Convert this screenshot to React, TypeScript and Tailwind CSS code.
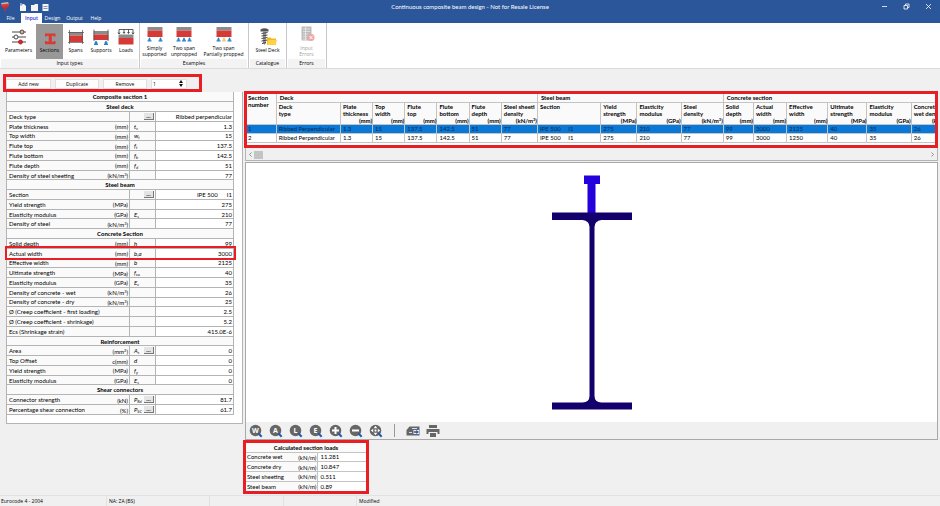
import { useState } from 'react';
import type { ReactNode } from 'react';

interface Row {
    name: string;
    unit?: ReactNode;
    sym?: string;
    sub?: string;
    more?: boolean;
    value: string;
    marked?: boolean;
}

interface Group {
    title: string;
    rows: Row[];
}

const perM3 = <>(kN/m<sup className="text-[4px]">3</sup>)</>;
const mm2 = <>(mm<sup className="text-[4px]">2</sup>)</>;

const groups: Group[] = [
    {
        title: 'Steel deck',
        rows: [
            { name: 'Deck type', more: true, value: 'Ribbed perpendicular' },
            { name: 'Plate thickness', unit: '(mm)', sym: 't', sub: 'c', value: '1.3' },
            { name: 'Top width', unit: '(mm)', sym: 'w', sub: 't', value: '15' },
            { name: 'Flute top', unit: '(mm)', sym: 'f', sub: 't', value: '137.5' },
            { name: 'Flute bottom', unit: '(mm)', sym: 'f', sub: 'b', value: '142.5' },
            { name: 'Flute depth', unit: '(mm)', sym: 'f', sub: 'd', value: '51' },
            { name: 'Density of steel sheeting', unit: perM3, value: '77' },
        ],
    },
    {
        title: 'Steel beam',
        rows: [
            { name: 'Section', more: true, value: 'IPE 500\u00a0\u00a0\u00a0\u00a0\u00a0\u00a0I1' },
            { name: 'Yield strength', unit: '(MPa)', value: '275' },
            { name: 'Elasticity modulus', unit: '(GPa)', sym: 'E', sub: 's', value: '210' },
            { name: 'Density of steel', unit: perM3, value: '77' },
        ],
    },
    {
        title: 'Concrete Section',
        rows: [
            { name: 'Solid depth', unit: '(mm)', sym: 'h', value: '99' },
            { name: 'Actual width', unit: '(mm)', sym: 'b,a', value: '3000', marked: true },
            { name: 'Effective width', unit: '(mm)', sym: 'b', value: '2125' },
            { name: 'Ultimate strength', unit: '(MPa)', sym: 'f', sub: 'cu', value: '40' },
            { name: 'Elasticity modulus', unit: '(GPa)', sym: 'E', sub: 'c', value: '35' },
            { name: 'Density of concrete - wet', unit: perM3, value: '26' },
            { name: 'Density of concrete - dry', unit: perM3, value: '25' },
            { name: 'Ø (Creep coefficient - first loading)', value: '2.5' },
            { name: 'Ø (Creep coefficient - shrinkage)', value: '5.2' },
            { name: 'Ecs (Shrinkage strain)', value: '415.0E-6' },
        ],
    },
    {
        title: 'Reinforcement',
        rows: [
            { name: 'Area', unit: mm2, sym: 'A', sub: 's', more: true, value: '0' },
            { name: 'Top Offset', unit: 'c(mm)', sym: 'd', value: '0' },
            { name: 'Yield strength', unit: '(MPa)', sym: 'f', sub: 'y', value: '0' },
            { name: 'Elasticity modulus', unit: '(GPa)', sym: 'E', sub: 's', value: '0' },
        ],
    },
    {
        title: 'Shear connectors',
        rows: [
            { name: 'Connector strength', unit: '(kN)', sym: 'P', sub: 'Rd', more: true, value: '81.7' },
            { name: 'Percentage shear connection', unit: '(%)', sym: 'P', sub: 'SC', more: true, value: '61.7' },
        ],
    },
];

interface Column {
    width: string;
    lines: [string, string];
    unit?: ReactNode;
    values: [string, string];
}

const columns: Column[] = [
    { width: 'w-[64px]', lines: ['Deck', 'type'], values: ['Ribbed Perpendicular', 'Ribbed Perpendicular'] },
    { width: 'w-[32px]', lines: ['Plate', 'thickness'], unit: '(mm)', values: ['1.3', '1.3'] },
    { width: 'w-[32px]', lines: ['Top', 'width'], unit: '(mm)', values: ['15', '15'] },
    { width: 'w-[32px]', lines: ['Flute', 'top'], unit: '(mm)', values: ['137.5', '137.5'] },
    { width: 'w-[32px]', lines: ['Flute', 'bottom'], unit: '(mm)', values: ['142.5', '142.5'] },
    { width: 'w-[32px]', lines: ['Flute', 'depth'], unit: '(mm)', values: ['51', '51'] },
    { width: 'w-[36px]', lines: ['Steel sheeti', 'density'], unit: perM3, values: ['77', '77'] },
    { width: 'w-[63px]', lines: ['Section', ''], values: ['IPE 500\u00a0\u00a0\u00a0\u00a0\u00a0I1', 'IPE 500\u00a0\u00a0\u00a0\u00a0\u00a0I1'] },
    { width: 'w-[36px]', lines: ['Yield', 'strength'], unit: '(MPa)', values: ['275', '275'] },
    { width: 'w-[44px]', lines: ['Elasticity', 'modulus'], unit: '(GPa)', values: ['210', '210'] },
    { width: 'w-[42px]', lines: ['Steel', 'density'], unit: perM3, values: ['77', '77'] },
    { width: 'w-[30px]', lines: ['Solid', 'depth'], unit: '(mm)', values: ['99', '99'] },
    { width: 'w-[33px]', lines: ['Actual', 'width'], unit: '(mm)', values: ['3000', '3000'] },
    { width: 'w-[41px]', lines: ['Effective', 'width'], unit: '(mm)', values: ['2125', '1250'] },
    { width: 'w-[39px]', lines: ['Ultimate', 'strength'], unit: '(MPa)', values: ['40', '40'] },
    { width: 'w-[44px]', lines: ['Elasticity', 'modulus'], unit: '(GPa)', values: ['35', '35'] },
    { width: 'w-[42px]', lines: ['Concrete', 'wet density'], unit: perM3, values: ['26', '26'] },
];

const loads = [
    ['Concrete wet', '11.281'],
    ['Concrete dry', '10.847'],
    ['Steel sheeting', '0.511'],
    ['Steel beam', '0.89'],
];

/* ---------- ribbon icons ---------- */

const ParametersIcon = () => (
    <svg className="h-5 w-5" viewBox="0 0 20 20" fill="none" stroke="#4a4a4a" strokeWidth="1">
        <path d="M3 5h14M3 10h14M3 15h14" />
        <circle cx="13" cy="5" r="2" fill="#f2a0a0" />
        <circle cx="7" cy="10" r="2" fill="#fff" />
        <circle cx="11.500" cy="15" r="2" fill="#e02020" stroke="#a33" />
    </svg>
);

const SectionsIcon = () => (
    <svg className="h-5 w-5" viewBox="0 0 20 20" fill="#d93a33">
        <path d="M5 6.500h10.500v3H14l-.8-.8h-1.400v6h1.400l.8-.8h1.500v3.300H5v-3.300h1.500l.8.8h1.400v-6H7.300l-.8.8H5z" />
    </svg>
);

const SpansIcon = () => (
    <svg className="h-5 w-5" viewBox="0 0 20 20">
        <path d="M3 5h14v3.500H3z" fill="#8c8c8c" />
        <path d="M3 8.500h14V15H3z" fill="#d53a34" />
        <path d="M3.500 3v14M16.500 3v14M2 5.500h16M2 15.500h16" stroke="#555" strokeWidth=".7" />
    </svg>
);

const SupportsIcon = () => (
    <svg className="h-5 w-5" viewBox="0 0 20 20">
        <path d="M2.500 4h15v3.500h-15z" fill="#8c8c8c" />
        <path d="M2.500 7.500h15V13h-15z" fill="#d53a34" />
        <path d="M3 2.500v11.500M17 2.500v11.500" stroke="#555" strokeWidth=".8" />
        <path d="M5 13.500l1.500 2-.5 1h1V18H3v-1.500h1l-.5-1zM15 13.500l1.500 2-.5 1h1V18h-4v-1.500h1l-.5-1z" fill="#2583c9" />
    </svg>
);

const LoadsIcon = () => (
    <svg className="h-5 w-5" viewBox="0 0 20 20">
        <path d="M2.500 7.500h15V11h-15z" fill="#8c8c8c" />
        <path d="M2.500 11h15v6.500h-15z" fill="#d53a34" />
        <path d="M3 7V2.500h14V7M8 2.500V6M12.500 2.500V6M2 5.500l1 1.500 1-1.500M7 5l1 1.500L9 5M11.500 5l1 1.500 1-1.500M16 5.500l1 1.500 1-1.500" fill="none" stroke="#333" strokeWidth=".8" />
    </svg>
);

const SpanExampleIcon = ({ mid }: { mid?: string }) => (
    <svg className="h-5 w-5" viewBox="0 0 20 20">
        <path d="M2.500 2h15v3.500h-15z" fill="#8c8c8c" />
        <path d="M2.500 5.500h15V12h-15z" fill="#d53a34" />
        <path d="M4.500 12.300l1.300 2-.5 1H6.500v1.200h-4v-1.200h1.200l-.5-1zM15.500 12.300l1.300 2-.5 1h1.200v1.200h-4v-1.200h1.200l-.5-1z" fill="#2583c9" />
        {mid && <path d="M10 12.300l1.300 2-.5 1H12v1.200H8v-1.200h1.200l-.5-1z" fill={mid} />}
    </svg>
);

const SteelDeckIcon = () => (
    <svg className="h-5 w-5" viewBox="0 0 20 20">
        <path d="M2.500 2.500Q6.500 0 10.500 2.500V4.500h-8z" fill="#555" />
        <path d="M5 4h3v12l-1.500 2L5 16z" fill="#999" />
        <path d="M3.500 6.500l6-1M3.500 9l6-1M3.500 11.500l6-1M3.500 14l6-1M4 16.500l4-1" stroke="#444" strokeWidth="1" />
        <path d="M9 10.500h3.500l1 1H18V18H9z" fill="#f7b918" />
        <path d="M10.500 13H19l-1.500 5H9z" fill="#ffd04a" />
    </svg>
);

const ErrorsIcon = () => (
    <svg className="h-5 w-5" viewBox="0 0 20 20">
        <path d="M4.500 1.500h10v14h-10z" fill="#bdbdbd" />
        <path d="M6 4h7M6 6.500h7M6 9h5M6 11.500h4M6 14h4M8.500 2v13" stroke="#eee" strokeWidth=".7" />
        <circle cx="14" cy="12.500" r="3.500" fill="#f0a5a5" />
        <path d="M12.500 11l3 3M15.500 11l-3 3" stroke="#fff" strokeWidth="1" />
    </svg>
);

/* ---------- view toolbar icons ---------- */

const LensIcon = ({ children }: { children: ReactNode }) => (
    <svg className="h-[14px] w-[14px]" viewBox="0 0 14 14">
        <circle cx="6.500" cy="6.500" r="5.800" fill="#666" />
        {children}
        <path d="M9.300 9.300l3.400 3.400" stroke="#2457b5" strokeWidth="2" />
    </svg>
);

const Letter = ({ ch }: { ch: string }) => (
    <text x="6.500" y="9" textAnchor="middle" fontSize="7" fontWeight="700" fill="#fff">{ch}</text>
);

const viewTools: { label: string; icon: ReactNode }[] = [
    { label: 'Zoom window', icon: <Letter ch="W" /> },
    { label: 'Zoom all', icon: <Letter ch="A" /> },
    { label: 'Zoom last', icon: <Letter ch="L" /> },
    { label: 'Zoom extents', icon: <Letter ch="E" /> },
    { label: 'Zoom in', icon: <path d="M3 6.500h7M6.500 3v7" stroke="#fff" strokeWidth="2" /> },
    { label: 'Zoom out', icon: <path d="M3 6.500h7" stroke="#fff" strokeWidth="2" /> },
    {
        label: 'Pan',
        icon: (
            <path d="M6.500 1.800l1.800 2.400H4.700zM6.500 11.200l1.800-2.400H4.700zM1.800 6.500l2.400-1.800v3.600zM11.200 6.500L8.800 4.700v3.600zM5.600 5.600h1.800v1.800H5.600z" fill="#fff" />
        ),
    },
];

const RibbonButton = ({ icon, label, width, active, disabled }: {
    icon: ReactNode; label: string[]; width: string; active?: boolean; disabled?: boolean;
}) => (
    <button
        disabled={disabled}
        className={`flex h-[35px] flex-col items-center ${width} ${active ? 'bg-[#989898]' : ''} ${disabled ? 'text-[#a0a0a0]' : ''}`}
    >
        <span className={label.length === 1 ? 'pt-[3px]' : 'pt-[1px]'}>{icon}</span>
        <span className="flex flex-col whitespace-nowrap leading-[6px]">
            {label.map((line) => <span key={line}>{line}</span>)}
        </span>
    </button>
);

const RibbonGroup = ({ title, children }: { title: string; children: ReactNode }) => (
    <div className="flex flex-col border-r border-[#c8c8c8] px-[1px]">
        <div className="flex pt-[1px]">{children}</div>
        <div className="h-[9px] bg-[#f3f3f3] text-center leading-[9px]">{title}</div>
    </div>
);

const App: React.FC = () => {
    const [section, setSection] = useState(1);

    return (
        <div className="flex min-h-screen flex-col overflow-hidden bg-[#f0f0f0] font-['Open_Sans','Noto_Sans',sans-serif] text-[5px] text-black">
            <header className="bg-[#2b579a] text-white">
                <div className="flex h-[13px] items-center">
                    <div className="flex flex-1 items-center">
                        <svg className="ml-[1px] h-[9px] w-[9px]" viewBox="0 0 9 9">
                            <path d="M0 1l7-1 1 2-7 1z" fill="#bbb" />
                            <path d="M0 2.500L8 1.500V4L1 5z" fill="#e03a30" />
                            <path d="M2 5l5-1v1.500l-2 .5v1.500l1 .5-3 1V7.500H4V6L2 6.500z" fill="#d92c25" />
                        </svg>
                        <svg className="ml-2 h-[9px] w-8" viewBox="0 0 32 9" fill="#f4f4f4">
                            <path d="M2 2h4l2 2v5H2zM13 3h3l1-1h3v7h-7zM24.500 2h6v7h-6z" />
                            <path d="M2 1h2v2H2zM25.500 4.500h4M25.500 6.500h4" stroke="#2b579a" strokeWidth=".6" />
                        </svg>
                    </div>
                    <h1 className="font-['Lato','Noto_Sans',sans-serif] text-[6px] leading-[9px]">Continuous composite beam design - Not for Resale License</h1>
                    <div className="flex flex-1 justify-end">
                        <div className="mr-2 flex w-0 items-center justify-end gap-[15px]">
                            <button aria-label="Minimize">
                                <svg className="h-[7px] w-[7px]" viewBox="0 0 7 7" stroke="#fff" strokeWidth=".8"><path d="M1 3.500h5" /></svg>
                            </button>
                            <button aria-label="Restore">
                                <svg className="h-[7px] w-[7px]" viewBox="0 0 7 7" fill="none" stroke="#fff" strokeWidth=".8">
                                    <path d="M1 2.500h3.500V6H1zM2.500 2V1H6v3.500H5" />
                                </svg>
                            </button>
                            <button aria-label="Close">
                                <svg className="h-[7px] w-[7px]" viewBox="0 0 7 7" stroke="#fff" strokeWidth=".8"><path d="M1 1l5 5M6 1L1 6" /></svg>
                            </button>
                        </div>
                    </div>
                </div>
                <nav className="flex h-[10px] leading-[10px]">
                    <button className="w-[21px]">File</button>
                    <button className="w-[21px] bg-white font-semibold text-[#2b2be0]">Input</button>
                    <button className="w-[21px]">Design</button>
                    <button className="w-[23px]">Output</button>
                    <button className="w-[20px]">Help</button>
                </nav>
            </header>

            <div className="flex h-[46px] border-b border-[#dcdcdc] bg-white">
                <RibbonGroup title="Input types">
                    <RibbonButton icon={<ParametersIcon />} label={['Parameters']} width="w-[35px]" />
                    <RibbonButton icon={<SectionsIcon />} label={['Sections']} width="w-[27px]" active />
                    <RibbonButton icon={<SpansIcon />} label={['Spans']} width="w-[25px]" />
                    <RibbonButton icon={<SupportsIcon />} label={['Supports']} width="w-[26px]" />
                    <RibbonButton icon={<LoadsIcon />} label={['Loads']} width="w-[24px]" />
                </RibbonGroup>
                <RibbonGroup title="Examples">
                    <RibbonButton icon={<SpanExampleIcon />} label={['Simply', 'supported']} width="w-[27px]" />
                    <RibbonButton icon={<SpanExampleIcon mid="#2583c9" />} label={['Two span', 'unpropped']} width="w-[32px]" />
                    <RibbonButton icon={<SpanExampleIcon mid="#f5c668" />} label={['Two span', 'Partially propped']} width="w-[47px]" />
                </RibbonGroup>
                <RibbonGroup title="Catalogue">
                    <RibbonButton icon={<SteelDeckIcon />} label={['Steel Deck']} width="w-[35px]" />
                </RibbonGroup>
                <RibbonGroup title="Errors">
                    <RibbonButton icon={<ErrorsIcon />} label={['Input', 'Errors']} width="w-[37px]" disabled />
                </RibbonGroup>
            </div>

            <main className="flex flex-1 pr-[2px]">
                <section className="w-[243px] shrink-0 pl-[3px] pt-[5px]">
                    <div className="flex h-[18px] w-[199px] items-center gap-1 border-3 border-[#e81e25] pt-[1px]">
                        <button className="h-[10px] w-[45px] border border-[#e0e0e0] bg-[#fdfdfd] leading-[8px]">Add new</button>
                        <button className="h-[10px] w-[44px] border border-[#e0e0e0] bg-[#fdfdfd] leading-[8px]">Duplicate</button>
                        <button className="h-[10px] w-[44px] border border-[#e0e0e0] bg-[#fdfdfd] leading-[8px]">Remove</button>
                        <div className="flex h-[10px] w-[36px] items-center border border-[#e0e0e0] bg-white">
                            <input
                                aria-label="Section"
                                value={section}
                                onChange={(e) => setSection(Number(e.target.value) || 1)}
                                className="w-full min-w-0 pl-[1px] leading-[8px] outline-none"
                            />
                            <div className="flex flex-col gap-[1px] pr-[3px]">
                                <button aria-label="Next section" onClick={() => setSection(section + 1)}>
                                    <svg className="block h-[3px] w-[4px]" viewBox="0 0 4 3"><path d="M2 0l2 3H0z" fill="#111" /></svg>
                                </button>
                                <button aria-label="Previous section" onClick={() => setSection(Math.max(1, section - 1))}>
                                    <svg className="block h-[3px] w-[4px]" viewBox="0 0 4 3"><path d="M0 0h4L2 3z" fill="#111" /></svg>
                                </button>
                            </div>
                        </div>
                    </div>

                    <div className="ml-[3px] border-x border-b border-[#b4b4b4] bg-white pb-2 pr-2">
                        <table className="h-[323px] w-full table-fixed font-['Lato','Noto_Sans',sans-serif] text-[6px] leading-[7px]">
                            <colgroup>
                                <col />
                                <col className="w-[22px]" />
                                <col className="w-[26px]" />
                                <col className="w-[78px]" />
                            </colgroup>
                            <tbody>
                                <tr className="h-[9px] border-b border-[#b4b4b4] bg-[#fafafa]">
                                    <th colSpan={4} className="border-r border-[#b4b4b4]">Composite section 1</th>
                                </tr>
                                {groups.map((g) => [
                                    <tr key={g.title} className="h-[9px] border-b border-[#b4b4b4] bg-[#fafafa]">
                                        <th colSpan={4} className="border-r border-[#b4b4b4]">{g.title}</th>
                                    </tr>,
                                    ...g.rows.map((r) => (
                                        <tr
                                            key={g.title + r.name}
                                            className={`h-[9px] border-b border-[#b4b4b4] ${r.marked ? 'relative z-10 outline-2 outline-[#e81e25]' : ''}`}
                                        >
                                            <td className="whitespace-nowrap bg-[#fafafa] pl-[2px]">{r.name}</td>
                                            <td className="whitespace-nowrap border-r border-[#b4b4b4] bg-[#fafafa] pr-[1px] pt-[2px] text-right leading-[6px]">{r.unit}</td>
                                            <td className="border-r border-[#b4b4b4] bg-[#fafafa] px-[1px]">
                                                <div className="flex h-[7px] items-center justify-between">
                                                    <span className="pl-[3px] italic">
                                                        {r.sym}
                                                        {r.sub && <sub className="text-[4px]">{r.sub}</sub>}
                                                    </span>
                                                    {r.more && (
                                                        <button
                                                            aria-label={`Choose ${r.name}`}
                                                            className="h-[7px] w-[10px] border-b border-r border-[#777] bg-[#e4e4e4] font-bold leading-[4px]"
                                                        >
                                                            ...
                                                        </button>
                                                    )}
                                                </div>
                                            </td>
                                            <td className="whitespace-nowrap border-r border-[#b4b4b4] pr-[1px] text-right">{r.value}</td>
                                        </tr>
                                    )),
                                ])}
                            </tbody>
                        </table>
                    </div>
                </section>

                <section className="mt-[22px] flex min-w-0 flex-1 flex-col">
                    <div className="ml-[1px] h-[57px] overflow-hidden border-3 border-[#e81e25] bg-white">
                        <table className="w-[707px] table-fixed text-left font-['Lato','Noto_Sans',sans-serif] text-[6px] leading-[7px]">
                            <colgroup>
                                <col className="w-[29px]" />
                                {columns.map((c, i) => <col key={i} className={c.width} />)}
                            </colgroup>
                            <thead className="bg-[#fafafa] align-top">
                                <tr className="h-[8px] border-b border-[#c4c4c4]">
                                    <th rowSpan={2} className="border-r border-[#c4c4c4] pl-[1px]">Section<br />number</th>
                                    <th colSpan={7} className="border-r border-[#c4c4c4] pl-[3px]">Deck</th>
                                    <th colSpan={4} className="border-r border-[#c4c4c4] pl-[3px]">Steel beam</th>
                                    <th colSpan={6} className="pl-[3px]">Concrete section</th>
                                </tr>
                                <tr className="h-[22px] border-b border-[#c4c4c4]">
                                    {columns.map((c, i) => (
                                        <th key={i} className="whitespace-nowrap border-r border-[#c4c4c4] pl-[2px]">
                                            <div>{c.lines[0]}</div>
                                            <div>{c.lines[1]}</div>
                                            <div className="text-right">{c.unit}</div>
                                        </th>
                                    ))}
                                </tr>
                            </thead>
                            <tbody>
                                {[0, 1].map((n) => (
                                    <tr key={n} className={`h-[9px] border-b border-[#c4c4c4] ${n === 0 ? 'bg-[#0a78d7] text-[#06284c]' : ''}`}>
                                        <td className="border-r border-[#c4c4c4] pl-[1px]">{n + 1}</td>
                                        {columns.map((c, i) => (
                                            <td key={i} className="whitespace-nowrap border-r border-[#c4c4c4] pl-[2px]">{c.values[n]}</td>
                                        ))}
                                    </tr>
                                ))}
                            </tbody>
                        </table>
                    </div>
                    <div className="ml-[2px] flex h-[13px] items-center border-x border-b border-[#b4b4b4] px-[3px] pt-[1px]">
                        <button aria-label="Scroll left">
                            <svg className="h-[5px] w-[3px]" viewBox="0 0 3 5" fill="none" stroke="#777" strokeWidth=".8"><path d="M2.500 0.500l-2 2 2 2" /></svg>
                        </button>
                        <div className="ml-[2px] h-[8px] w-[9px] bg-[#c4c4c4]" />
                        <button aria-label="Scroll right" className="ml-auto">
                            <svg className="h-[5px] w-[3px]" viewBox="0 0 3 5" fill="none" stroke="#777" strokeWidth=".8"><path d="M0.500 0.500l2 2-2 2" /></svg>
                        </button>
                    </div>

                    <div className="ml-[2px] mt-[1px] border border-[#a8a8a8]">
                        <div className="flex justify-center bg-white py-3">
                            <svg className="h-[235px] w-20" viewBox="0 0 80 235">
                                <path d="M32 0.500h16v8.500h-4.500v29h-8V9H32z" fill="#2400dc" />
                                <path d="M0 37.500h80V45H49.500Q42.500 46 42.500 52v169Q42.500 227 49.500 227.500H80v7H0v-7h30.500Q37.500 227 37.500 221V52Q37.500 46 30.500 45H0z" fill="#14006c" />
                            </svg>
                        </div>
                        <div className="flex h-[17px] items-center gap-[6px] pl-[3px]">
                            {viewTools.map((t) => (
                                <button key={t.label} aria-label={t.label}><LensIcon>{t.icon}</LensIcon></button>
                            ))}
                            <div className="mx-[5px] h-[13px] w-[1px] bg-[#999]" />
                            <button aria-label="Export drawing">
                                <svg className="h-[12px] w-[14px]" viewBox="0 0 14 12">
                                    <path d="M.5 5l3-3.500h10v9H.5z" fill="#666" />
                                    <path d="M6 3h5v1H6zM3 7h3v1H3z" fill="#ddd" />
                                    <path d="M7.500 5H13v4H7.500z" fill="#e8eefc" />
                                    <path d="M8 6.300h2.300V5L13 7l-2.700 2V7.700H8z" fill="#2457b5" />
                                </svg>
                            </button>
                            <button aria-label="Print">
                                <svg className="h-[12px] w-[14px]" viewBox="0 0 14 12" fill="#666">
                                    <path d="M3 0h8v3H3zM.5 4h13v5H11.500V7h-9v2h-2zM4 8h6v4H4z" />
                                </svg>
                            </button>
                        </div>
                    </div>

                    <div className="w-[126px] border-3 border-[#e81e25] bg-white">
                        <table className="h-[48px] w-full table-fixed font-['Lato','Noto_Sans',sans-serif] text-[6px] leading-[7px]">
                            <colgroup>
                                <col />
                                <col className="w-[24px]" />
                                <col className="w-[48px]" />
                            </colgroup>
                            <thead>
                                <tr className="h-[9px] border-b border-[#c4c4c4] bg-[#fafafa]">
                                    <th colSpan={3}>Calculated section loads</th>
                                </tr>
                            </thead>
                            <tbody>
                                {loads.map(([name, value]) => (
                                    <tr key={name} className="h-[9px] border-b border-[#c4c4c4] last:border-b-0">
                                        <td className="whitespace-nowrap bg-[#fafafa] pl-[1px]">{name}</td>
                                        <td className="border-r border-[#c4c4c4] bg-[#fafafa] pr-[1px] pt-[2px] text-right leading-[6px]">(kN/m)</td>
                                        <td className="pl-[2px]">{value}</td>
                                    </tr>
                                ))}
                            </tbody>
                        </table>
                    </div>
                </section>
            </main>

            <footer className="flex h-[11px] border-t border-[#e2e2e2] leading-[10px]">
                <span className="w-[107px] border-r border-[#e2e2e2] pl-[1px]">Eurocode 4 - 2004</span>
                <span className="w-[103px] border-r border-[#e2e2e2] pl-[2px]">NA: ZA (BS)</span>
                <span className="w-[74px] border-r border-[#e2e2e2]" />
                <span className="w-[73px] border-r border-[#e2e2e2]" />
                <span className="pl-[2px]">Modified</span>
            </footer>
        </div>
    );
};

export default App;
